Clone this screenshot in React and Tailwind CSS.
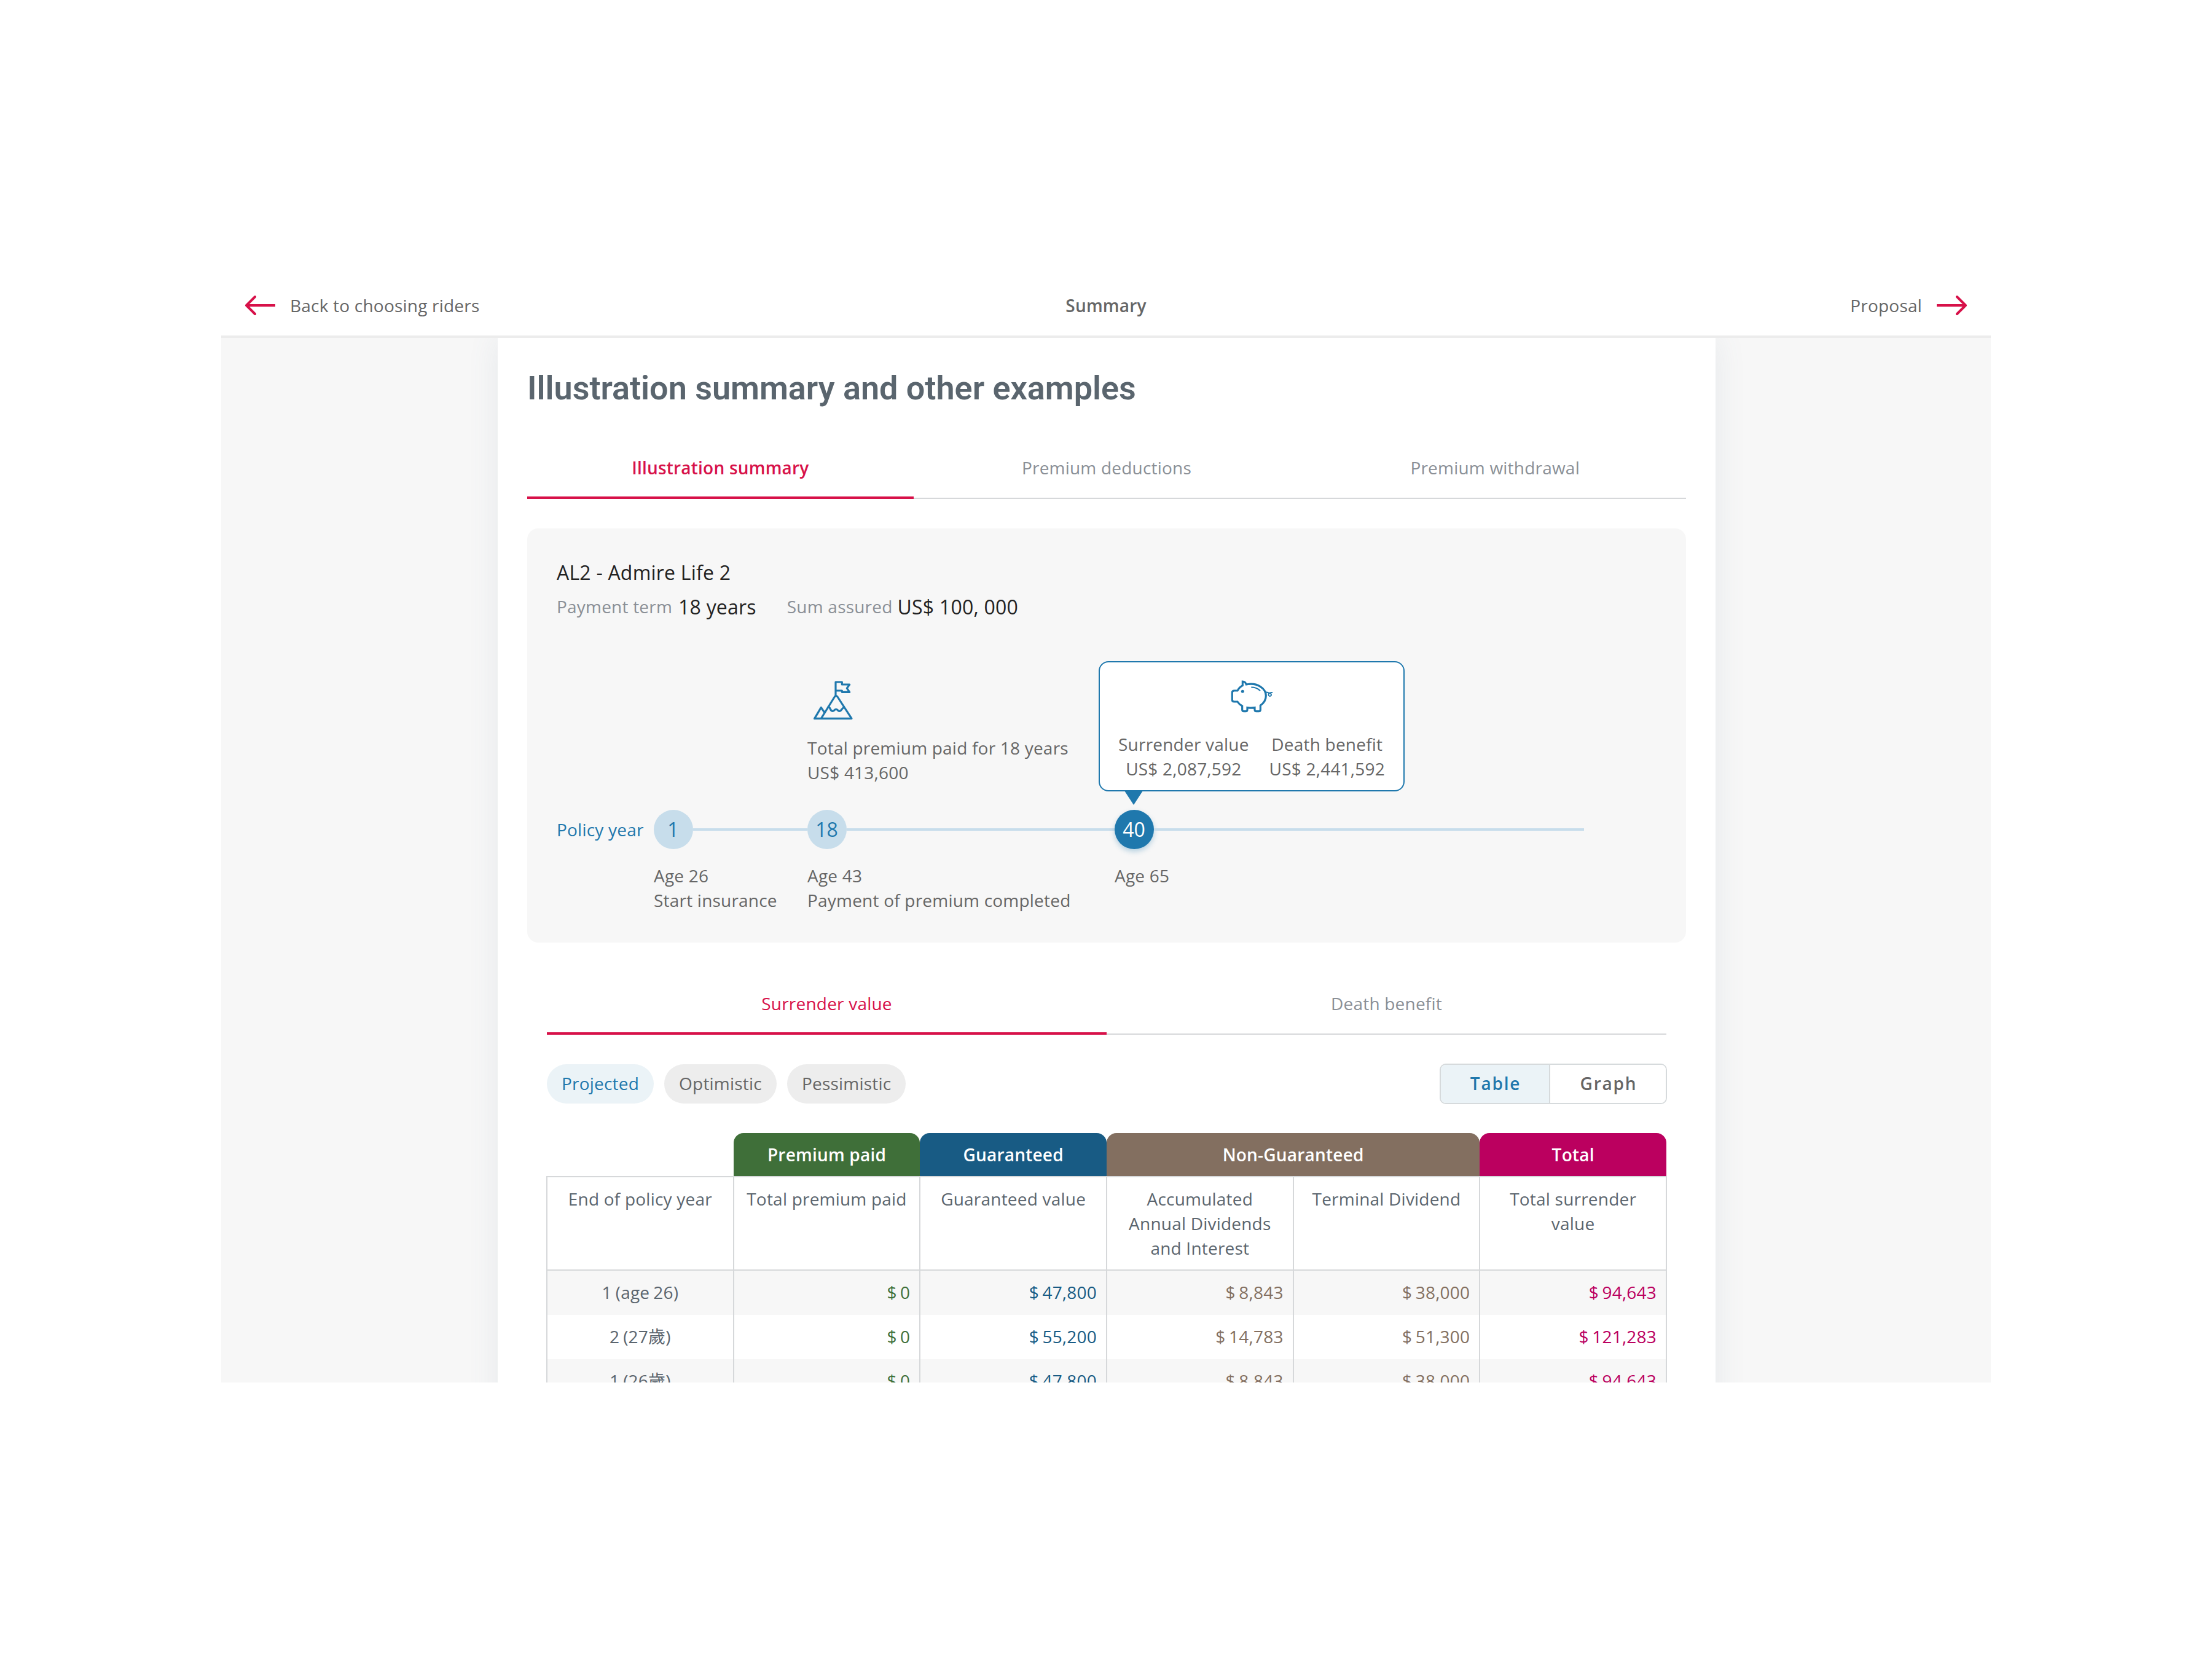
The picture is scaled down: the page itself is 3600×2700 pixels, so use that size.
const Arrow = ({ flip }) => (
  <svg width="52" height="34" viewBox="0 0 52 34" fill="none" stroke="#d71149" strokeWidth="4" strokeLinecap="round" strokeLinejoin="round" className={flip ? 'rotate-180' : ''}>
    <path d="M50 17H3" strokeLinecap="butt" />
    <path d="M17 3L3 17l14 14" />
  </svg>
);

const Mountain = () => (
  <svg width="64" height="64" viewBox="102 84 192 192" fill="none" stroke="#1f78ad" strokeWidth="9.5" strokeLinecap="round" strokeLinejoin="round">
    <path d="M210 155V90h31v12h37l-13 18.500 13 18.500h-37v-7h-31" />
    <path d="M107 268H288L219 162q-7-9-14 0L139 268" />
    <path d="M107 268l32-54 16 24" />
    <path d="M174 212q6 0 10 10 4 9 11 10 6 0 9-5 8-8 16 0 4 5 9 5 6-1 12-10l9-9" />
  </svg>
);

const Pig = () => (
  <svg width="69" height="53" viewBox="67 81 207 159" fill="none" stroke="#1f78ad" strokeWidth="9.500" strokeLinecap="round" strokeLinejoin="round">
    <path d="M100 132H84q-10 0-10 10v34q0 10 10 10h16q8 13 23 21v18q0 8 8 8h9q8 0 8-8v-10q18 3 36 0v10q0 8 8 8h12q8 0 8-8v-21q27-18 27-47c0-36-42-66-96-55q-5-15-18-15v20q-16 8-25 25z" strokeLinejoin="miter" />
    <circle cx="125" cy="136" r="7.500" fill="#1f78ad" stroke="none" />
    <path d="M167 115.500q26 0 44 17" strokeWidth="6.500" strokeLinecap="butt" />
    <path d="M236 140q8-1 16 3" strokeWidth="6" />
    <path d="M269 141q-12 0-17 7-3 10 6 11 8-1 7-8-3-7-13-8" strokeWidth="5.500" />
  </svg>
);

const Node = ({ value, active }) => (
  <div className="flex items-center">
    <div className={active
      ? 'flex size-16 shrink-0 items-center justify-center rounded-full bg-[#1f78ad] pr-px text-[32px] leading-none tracking-normal text-white shadow-[0_4px_8px_rgba(31,120,173,0.3)]'
      : 'flex size-16 shrink-0 items-center justify-center rounded-full bg-[#c7ddeb] pr-px text-[32px] leading-none tracking-normal text-[#1f78ad]'}>
      {value}
    </div>
    <div className="h-1 flex-1 bg-[#c7ddeb]" />
  </div>
);

const rows = [
  ['1 (age 26)', '$ 0', '$ 47,800', '$ 8,843', '$ 38,000', '$ 94,643'],
  ['2 (27歲)', '$ 0', '$ 55,200', '$ 14,783', '$ 51,300', '$ 121,283'],
  ['1 (26歲)', '$ 0', '$ 47,800', '$ 8,843', '$ 38,000', '$ 94,643'],
];
const cellColors = [
  'text-[#5b656e] justify-center px-4 [word-spacing:-1.5px]',
  'text-[#3f6f39] justify-end pr-[15px] [word-spacing:-2px]',
  'text-[#185b84] justify-end pr-[15px] [word-spacing:-2px]',
  'text-[#836f60] justify-end pr-[15px] [word-spacing:-2px]',
  'text-[#836f60] justify-end pr-[15px] [word-spacing:-2px]',
  'text-[#bb005f] justify-end pr-[15px] [word-spacing:-2px]',
];
const heads = ['End of policy year', 'Total premium paid', 'Guaranteed value', 'Accumulated\nAnnual Dividends\nand Interest', 'Terminal Dividend', 'Total surrender\nvalue'];
const gridCols = 'grid grid-cols-[repeat(5,303.67px)_1fr]';

export default function App() {
  return (
    <div className="h-[2700px] w-[3600px] bg-white pt-[450px] pl-[360px] font-['Open_Sans','Noto_Sans_CJK_TC',sans-serif] text-[28px] leading-10 tracking-[0.21px] text-[#666]">
      <div className="flex h-[1800px] w-[2880px] flex-col overflow-hidden bg-[#f7f7f7]">
        <header className="relative z-10 grid h-[100px] shrink-0 grid-cols-3 items-center border-b-4 border-[#ececec] bg-white px-[38px] pb-[2px]">
          <div className="flex items-center gap-[22px]"><Arrow /><span>Back to choosing riders</span></div>
          <div className="text-center font-semibold">Summary</div>
          <div className="flex items-center justify-end gap-[22px]"><span>Proposal</span><Arrow flip /></div>
        </header>

        <main className="ml-[450px] h-[1800px] w-[1982px] shrink-0 bg-white px-12 shadow-[0_0_48px_rgba(90,120,150,0.11)]">
          <h1 className="pt-[46px] font-[Roboto] text-[54px] leading-[72px] font-semibold tracking-[-0.02px] whitespace-nowrap text-[#5a656e]">Illustration summary and other examples</h1>

          <nav className="mt-[72px] grid h-[72px] grid-cols-3 text-center text-[#8a8f96]">
            <div className="border-b-4 border-[#d71149] pt-px font-semibold text-[#d71149]">Illustration summary</div>
            <div className="border-b-2 border-[#d6d8da] pt-px">Premium deductions</div>
            <div className="border-b-2 border-[#d6d8da] pt-px pl-[7px]">Premium withdrawal</div>
          </nav>

          <section className="mt-12 h-[674px] rounded-[18px] bg-[#f7f7f7] p-12">
            <div className="text-[32px] leading-[48px] text-[#222]">AL2 - Admire Life 2</div>
            <div className="mt-2 flex gap-[50px] leading-[48px]">
              <div className="flex items-center gap-[10px]"><span className="-mt-[2px] text-[#8a8f96]">Payment term</span><span className="text-[32px] text-[#222]">18 years</span></div>
              <div className="flex items-center gap-2"><span className="-mt-[2px] text-[#8a8f96]">Sum assured</span><span className="text-[32px] text-[#222]">US$ 100, 000</span></div>
            </div>
            <div className="mt-16 grid grid-cols-[158px_250px_500px_764px] grid-rows-[242px_64px_auto] whitespace-nowrap">
              <div /><div />
              <div className="pt-8">
                <div className="ml-[10px]"><Mountain /></div>
                <div className="mt-[25px]">Total premium paid for 18 years<br />US$ 413,600</div>
              </div>
              <div className="relative -ml-[26px] flex h-[212px] w-[498px] flex-col items-center rounded-2xl border-2 border-[#1f78ad] bg-white pt-[29px]">
                <Pig />
                <div className="mt-[31px] flex gap-[33px] text-center">
                  <div>Surrender value<br />US$ 2,087,592</div>
                  <div>Death benefit<br />US$ 2,441,592</div>
                </div>
                <svg className="absolute top-[208px] left-[40px]" width="30" height="24" viewBox="0 0 30 24" fill="#1f78ad"><path d="M0 1H30L15 24z" /></svg>
              </div>
              <div className="flex items-center text-[#1f78ad]">Policy year</div>
              <Node value="1" /><Node value="18" /><Node value="40" active />
              <div />
              <div className="pt-[23px]">Age 26<br />Start insurance</div>
              <div className="pt-[23px]">Age 43<br />Payment of premium completed</div>
              <div className="pt-[23px]">Age 65</div>
            </div>
          </section>

          <div className="mx-8 mt-[79px]">
            <nav className="grid h-[71px] grid-cols-2 text-center text-[#8a8f96]">
              <div className="border-b-4 border-[#d71149] text-[#d71149]">Surrender value</div>
              <div className="border-b-2 border-[#d6d8da]">Death benefit</div>
            </nav>
            <div className="mt-[47px] flex items-center justify-between">
              <div className="flex gap-[17px]">
                <button className="h-16 rounded-full bg-[#ebf3f7] px-6 pb-[2px] text-[#1f78ad]">Projected</button>
                <button className="h-16 rounded-full bg-[#ededed] px-6 pb-[2px]">Optimistic</button>
                <button className="h-16 rounded-full bg-[#ededed] px-6 pb-[2px]">Pessimistic</button>
              </div>
              <div className="-mr-px flex h-[66px] w-[370px] overflow-hidden rounded-[10px] border-2 border-[#d6dadc] font-semibold tracking-[1.8px]">
                <div className="flex w-[178px] items-center justify-center border-r-2 border-[#d6dadc] bg-[#ebf3f7] pb-[2px] pl-[2px] text-[#1f78ad]">Table</div>
                <div className="flex flex-1 items-center justify-center bg-white pb-[2px] pl-[2px]">Graph</div>
              </div>
            </div>
            <div className="mt-[47px] grid h-[70px] grid-cols-6 text-center leading-[70px] font-semibold text-white">
              <div />
              <div className="rounded-t-2xl bg-[#3f6f39]">Premium paid</div>
              <div className="rounded-t-2xl bg-[#185b84]">Guaranteed</div>
              <div className="col-span-2 rounded-t-2xl bg-[#836f60]">Non-Guaranteed</div>
              <div className="rounded-t-2xl bg-[#bb005f]">Total</div>
            </div>
            <div className="-mx-px">
              <div className={`${gridCols} h-[154px] border-y-2 border-r-2 border-[#d6d8da] text-center whitespace-pre-line text-[#5b656e]`}>
                {heads.map((h) => <div key={h} className="border-l-2 border-[#d6d8da] px-4 pt-[15px]">{h}</div>)}
              </div>
              {rows.map((r, i) => (
                <div key={i} className={`${gridCols} h-[72px] border-r-2 border-[#d6d8da] ${i % 2 ? 'bg-white' : 'bg-[#f7f7f7]'}`}>
                  {r.map((c, j) => <div key={j} className={`flex items-center border-l-2 border-[#d6d8da] pb-[2px] ${cellColors[j]}`}>{c}</div>)}
                </div>
              ))}
            </div>
          </div>
        </main>
      </div>
    </div>
  );
}
